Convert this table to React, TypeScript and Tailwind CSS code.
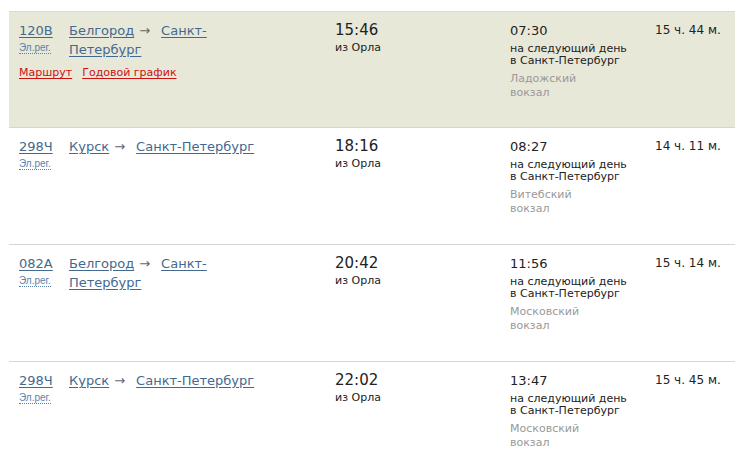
import React from 'react';

type Train = {
    num: string;
    from: string;
    to: string;
    dep: string;
    arr: string;
    station: string;
    hours: string;
    mins: string;
    active?: boolean;
};

const TRAINS: Train[] = [
    { num: '120В', from: 'Белгород', to: 'Санкт-Петербург', dep: '15:46', arr: '07:30', station: 'Ладожский вокзал', hours: '15', mins: '44', active: true },
    { num: '298Ч', from: 'Курск', to: 'Санкт-Петербург', dep: '18:16', arr: '08:27', station: 'Витебский вокзал', hours: '14', mins: '11' },
    { num: '082А', from: 'Белгород', to: 'Санкт-Петербург', dep: '20:42', arr: '11:56', station: 'Московский вокзал', hours: '15', mins: '14' },
    { num: '298Ч', from: 'Курск', to: 'Санкт-Петербург', dep: '22:02', arr: '13:47', station: 'Московский вокзал', hours: '15', mins: '45' },
];

const link = 'text-[#44698f] underline underline-offset-2 decoration-[#44698f]';

const App: React.FC = () => {
    return (
        <div className="w-[735px] h-[462px] overflow-hidden bg-white text-[#222] font-['DejaVu_Sans',sans-serif]">
            <div className="pt-[11px] pl-[9px]">
                {TRAINS.map((t, i) => (
                    <div
                        key={i}
                        className={`flex h-[117px] border-b border-[#d6d6d6] pt-[9px] pl-[10px] ${t.active ? 'bg-[#e8e8d8] border-t border-t-[#dcdcd0]' : ''}`}
                    >
                        {/* Number */}
                        <div className="w-[50px] shrink-0">
                            <div className="text-[13px] leading-[19px]">
                                <a className={link}>{t.num}</a>
                            </div>
                            <div className="mt-[2px] text-[10px] leading-[12px] font-['Liberation_Sans',sans-serif]">
                                <span className="text-[#5b82ad] border-b border-dotted border-[#5b82ad]">Эл.рег.</span>
                            </div>
                            {t.active && (
                                <div className="mt-[12px] text-[11px] leading-[14px] whitespace-nowrap">
                                    <a className="text-[#cc1111] underline underline-offset-2 mr-[10px]">Маршрут</a>
                                    <a className="text-[#cc1111] underline underline-offset-2">Годовой график</a>
                                </div>
                            )}
                        </div>

                        {/* Route */}
                        <div className="w-[266px] shrink-0">
                            <div className="w-[190px] text-[13px] leading-[19px]">
                                <a className={link}>{t.from}</a>
                                <span className="inline-block ml-[5px] mr-[11px] text-[#666]">→</span>
                                <a className={link}>{t.to}</a>
                            </div>
                        </div>

                        {/* Departure */}
                        <div className="w-[175px] shrink-0">
                            <div className="text-[15px] leading-[19px] text-[#222]">{t.dep}</div>
                            <div className="text-[11px] leading-[14px] mt-[1px]">из Орла</div>
                        </div>

                        {/* Arrival */}
                        <div className="w-[145px] shrink-0">
                            <div className="text-[13px] leading-[19px]">{t.arr}</div>
                            <div className="text-[11px] leading-[12px] mt-[3px]">
                                на следующий день
                                <br />в Санкт-Петербург
                            </div>
                            <div className="w-[80px] text-[11px] leading-[14px] mt-[5px] text-[#999]">{t.station}</div>
                        </div>

                        {/* Duration */}
                        <div className="text-[12px] leading-[19px] whitespace-nowrap">
                            {t.hours} ч. {t.mins} м.
                        </div>
                    </div>
                ))}
            </div>
        </div>
    );
};

export default App;
